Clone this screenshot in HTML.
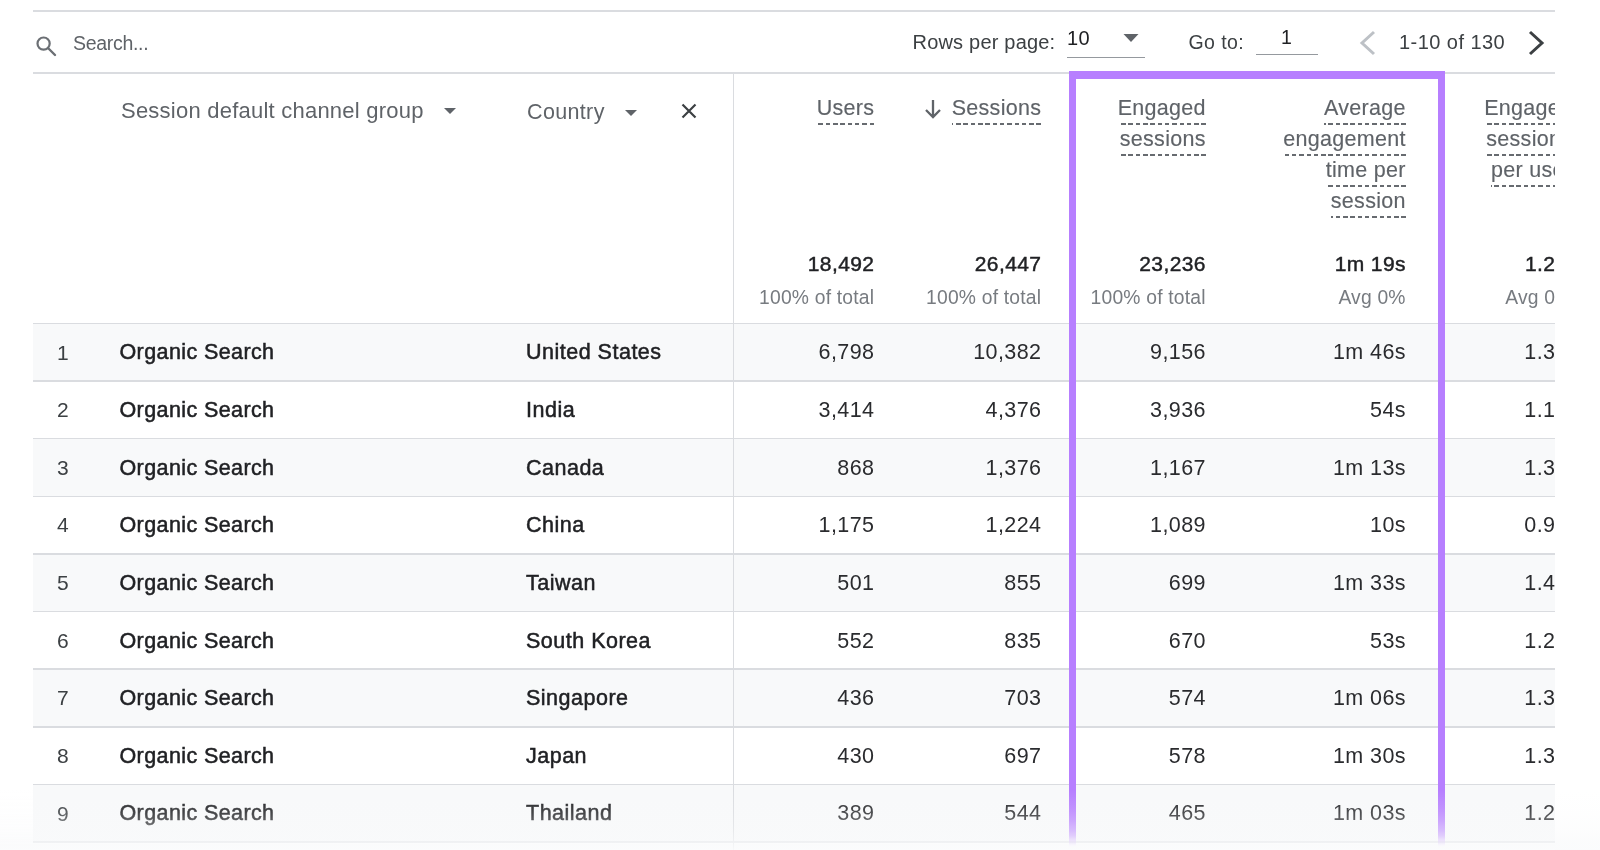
<!DOCTYPE html>
<html><head><meta charset="utf-8"><style>
html,body{margin:0;padding:0;width:1600px;height:850px;overflow:hidden;background:#fff;}
body{position:relative;font-family:"Liberation Sans",sans-serif;-webkit-font-smoothing:antialiased;}
#w{position:absolute;left:0;top:0;width:1600px;height:850px;will-change:transform;}
.t{position:absolute;line-height:0;white-space:nowrap;}
.r{position:absolute;}
.h{color:#5f6368;-webkit-text-stroke:0.15px #5f6368;}
.h span{position:relative;}
.h span::after{content:"";position:absolute;left:0;right:0;bottom:-4.94px;height:2px;background:repeating-linear-gradient(to left,#676b70 0,#676b70 4.5px,transparent 4.5px,transparent 7.3px);}
</style></head><body>
<div id="w">
<div class="r" style="left:33px;top:323.5px;width:1522px;height:57.61px;background:#f8f9fa;"></div>
<div class="r" style="left:33px;top:438.72px;width:1522px;height:57.61px;background:#f8f9fa;"></div>
<div class="r" style="left:33px;top:553.94px;width:1522px;height:57.61px;background:#f8f9fa;"></div>
<div class="r" style="left:33px;top:669.16px;width:1522px;height:57.61px;background:#f8f9fa;"></div>
<div class="r" style="left:33px;top:784.38px;width:1522px;height:57.61px;background:#f8f9fa;"></div>
<div class="r" style="left:33px;top:10.25px;width:1522px;height:1.5px;background:#dadce0;"></div>
<div class="r" style="left:33px;top:72.25px;width:1522px;height:1.5px;background:#dadce0;"></div>
<div class="r" style="left:33px;top:322.75px;width:1522px;height:1.5px;background:#dadce0;"></div>
<div class="r" style="left:33px;top:380.36px;width:1522px;height:1.5px;background:#dadce0;"></div>
<div class="r" style="left:33px;top:437.97px;width:1522px;height:1.5px;background:#dadce0;"></div>
<div class="r" style="left:33px;top:495.58px;width:1522px;height:1.5px;background:#dadce0;"></div>
<div class="r" style="left:33px;top:553.19px;width:1522px;height:1.5px;background:#dadce0;"></div>
<div class="r" style="left:33px;top:610.8px;width:1522px;height:1.5px;background:#dadce0;"></div>
<div class="r" style="left:33px;top:668.41px;width:1522px;height:1.5px;background:#dadce0;"></div>
<div class="r" style="left:33px;top:726.02px;width:1522px;height:1.5px;background:#dadce0;"></div>
<div class="r" style="left:33px;top:783.63px;width:1522px;height:1.5px;background:#dadce0;"></div>
<div class="r" style="left:33px;top:841.24px;width:1522px;height:1.5px;background:#dadce0;"></div>
<div class="r" style="left:732.75px;top:73px;width:1.5px;height:777px;background:#dadce0;"></div>
<svg class="r" style="left:34px;top:34px" width="24" height="24" viewBox="0 0 24 24"><circle cx="9.6" cy="9.6" r="6.1" fill="none" stroke="#6b6f74" stroke-width="2.2"/><path d="M14 14 L21 21" stroke="#6b6f74" stroke-width="2.4" stroke-linecap="round"/></svg>
<div class="t" style="left:73.00px;top:43.24px;font-size:19.5px;color:#5f6368;font-weight:400;letter-spacing:-0.3px;">Search...</div>
<div class="t" style="left:912.50px;top:42.07px;font-size:20px;color:#3c4043;font-weight:400;letter-spacing:0.2px;">Rows per page:</div>
<div class="t" style="left:1067.00px;top:38.07px;font-size:20px;color:#202124;font-weight:400;letter-spacing:0.4px;">10</div>
<svg class="r" style="left:1122px;top:33px" width="18" height="10" viewBox="0 0 18 10"><path d="M1.5 1 L16.5 1 L9 9 Z" fill="#5f6368"/></svg>
<div class="r" style="left:1067px;top:56.75px;width:78px;height:1.5px;background:#95999e;"></div>
<div class="t" style="left:1188.50px;top:41.99px;font-size:19.5px;color:#3c4043;font-weight:400;letter-spacing:0.4px;">Go to:</div>
<div class="t" style="left:1281.00px;top:36.99px;font-size:19.5px;color:#202124;font-weight:400;">1</div>
<div class="r" style="left:1256px;top:53.75px;width:62px;height:1.5px;background:#95999e;"></div>
<svg class="r" style="left:1356px;top:29px" width="24" height="28" viewBox="0 0 24 28"><path d="M18 3 L6 14 L18 25" fill="none" stroke="#bdc1c6" stroke-width="3"/></svg>
<div class="t" style="left:1399.00px;top:41.82px;font-size:20px;color:#3c4043;font-weight:400;letter-spacing:0.45px;">1-10 of 130</div>
<svg class="r" style="left:1524px;top:29px" width="24" height="28" viewBox="0 0 24 28"><path d="M6 3 L18 14 L6 25" fill="none" stroke="#3c4043" stroke-width="3"/></svg>
<div class="t" style="left:121.00px;top:110.88px;font-size:22px;color:#5f6368;font-weight:400;letter-spacing:0.23px;">Session default channel group</div>
<svg class="r" style="left:442px;top:106px" width="16" height="10" viewBox="0 0 16 10"><path d="M2 2 L14 2 L8 8 Z" fill="#5f6368"/></svg>
<div class="t" style="left:527.00px;top:112.05px;font-size:21.5px;color:#5f6368;font-weight:400;letter-spacing:0.35px;">Country</div>
<svg class="r" style="left:623px;top:108px" width="16" height="10" viewBox="0 0 16 10"><path d="M2 2 L14 2 L8 8 Z" fill="#5f6368"/></svg>
<svg class="r" style="left:679px;top:101px" width="20" height="20" viewBox="0 0 20 20"><path d="M3.5 3.5 L16.5 16.5 M16.5 3.5 L3.5 16.5" stroke="#3c4043" stroke-width="2.2"/></svg>
<div class="t h" style="right:725.70px;top:107.85px;font-size:21.5px;letter-spacing:0.3px;"><span>Users</span></div>
<div class="t h" style="right:558.70px;top:107.85px;font-size:21.5px;letter-spacing:0.3px;"><span>Sessions</span></div>
<svg class="r" style="left:923px;top:98px" width="20" height="22" viewBox="0 0 20 22"><path d="M10 2 L10 19 M3 12 L10 19 L17 12" fill="none" stroke="#5f6368" stroke-width="2.3"/></svg>
<div class="t h" style="right:394.20px;top:107.85px;font-size:21.5px;letter-spacing:0.3px;"><span>Engaged</span></div>
<div class="t h" style="right:394.20px;top:138.85px;font-size:21.5px;letter-spacing:0.3px;"><span>sessions</span></div>
<div class="t h" style="right:194.20px;top:107.85px;font-size:21.5px;letter-spacing:0.3px;"><span>Average</span></div>
<div class="t h" style="right:194.20px;top:138.85px;font-size:21.5px;letter-spacing:0.3px;"><span>engagement</span></div>
<div class="t h" style="right:194.20px;top:169.85px;font-size:21.5px;letter-spacing:0.3px;"><span>time per</span></div>
<div class="t h" style="right:194.20px;top:200.85px;font-size:21.5px;letter-spacing:0.3px;"><span>session</span></div>
<div class="t h" style="right:27.70px;top:107.85px;font-size:21.5px;letter-spacing:0.3px;"><span>Engaged</span></div>
<div class="t h" style="right:27.70px;top:138.85px;font-size:21.5px;letter-spacing:0.3px;"><span>sessions</span></div>
<div class="t h" style="right:27.70px;top:169.85px;font-size:21.5px;letter-spacing:0.3px;"><span>per user</span></div>
<div class="t" style="right:725.60px;text-align:right;top:263.72px;font-size:21px;color:#202124;font-weight:400;-webkit-text-stroke:0.45px #202124;letter-spacing:0.4px;">18,492</div>
<div class="t" style="right:725.80px;text-align:right;top:297.81px;font-size:19.3px;color:#777b80;font-weight:400;letter-spacing:0.2px;">100% of total</div>
<div class="t" style="right:558.60px;text-align:right;top:263.72px;font-size:21px;color:#202124;font-weight:400;-webkit-text-stroke:0.45px #202124;letter-spacing:0.4px;">26,447</div>
<div class="t" style="right:558.80px;text-align:right;top:297.81px;font-size:19.3px;color:#777b80;font-weight:400;letter-spacing:0.2px;">100% of total</div>
<div class="t" style="right:394.10px;text-align:right;top:263.72px;font-size:21px;color:#202124;font-weight:400;-webkit-text-stroke:0.45px #202124;letter-spacing:0.4px;">23,236</div>
<div class="t" style="right:394.30px;text-align:right;top:297.81px;font-size:19.3px;color:#777b80;font-weight:400;letter-spacing:0.2px;">100% of total</div>
<div class="t" style="right:194.10px;text-align:right;top:263.72px;font-size:21px;color:#202124;font-weight:400;-webkit-text-stroke:0.45px #202124;letter-spacing:0.4px;">1m 19s</div>
<div class="t" style="right:194.30px;text-align:right;top:297.81px;font-size:19.3px;color:#777b80;font-weight:400;letter-spacing:0.2px;">Avg 0%</div>
<div class="t" style="right:44.60px;text-align:right;top:263.72px;font-size:21px;color:#202124;font-weight:400;-webkit-text-stroke:0.45px #202124;letter-spacing:0.4px;">1.2</div>
<div class="t" style="right:44.80px;text-align:right;top:297.81px;font-size:19.3px;color:#777b80;font-weight:400;letter-spacing:0.2px;">Avg 0</div>
<div class="t" style="left:57.00px;top:352.62px;font-size:21px;color:#3c4043;font-weight:400;">1</div>
<div class="t" style="left:119.50px;top:352.45px;font-size:21.5px;color:#202124;font-weight:400;-webkit-text-stroke:0.5px #202124;letter-spacing:0.4px;">Organic Search</div>
<div class="t" style="left:526.00px;top:352.45px;font-size:21.5px;color:#202124;font-weight:400;-webkit-text-stroke:0.5px #202124;letter-spacing:0.5px;">United States</div>
<div class="t" style="right:725.60px;text-align:right;top:352.45px;font-size:21.5px;color:#2a2b2e;font-weight:400;letter-spacing:0.4px;">6,798</div>
<div class="t" style="right:558.60px;text-align:right;top:352.45px;font-size:21.5px;color:#2a2b2e;font-weight:400;letter-spacing:0.4px;">10,382</div>
<div class="t" style="right:394.10px;text-align:right;top:352.45px;font-size:21.5px;color:#2a2b2e;font-weight:400;letter-spacing:0.4px;">9,156</div>
<div class="t" style="right:194.10px;text-align:right;top:352.45px;font-size:21.5px;color:#2a2b2e;font-weight:400;letter-spacing:0.4px;">1m 46s</div>
<div class="t" style="right:44.60px;text-align:right;top:352.45px;font-size:21.5px;color:#2a2b2e;font-weight:400;letter-spacing:0.4px;">1.3</div>
<div class="t" style="left:57.00px;top:410.23px;font-size:21px;color:#3c4043;font-weight:400;">2</div>
<div class="t" style="left:119.50px;top:410.06px;font-size:21.5px;color:#202124;font-weight:400;-webkit-text-stroke:0.5px #202124;letter-spacing:0.4px;">Organic Search</div>
<div class="t" style="left:526.00px;top:410.06px;font-size:21.5px;color:#202124;font-weight:400;-webkit-text-stroke:0.5px #202124;letter-spacing:0.5px;">India</div>
<div class="t" style="right:725.60px;text-align:right;top:410.06px;font-size:21.5px;color:#2a2b2e;font-weight:400;letter-spacing:0.4px;">3,414</div>
<div class="t" style="right:558.60px;text-align:right;top:410.06px;font-size:21.5px;color:#2a2b2e;font-weight:400;letter-spacing:0.4px;">4,376</div>
<div class="t" style="right:394.10px;text-align:right;top:410.06px;font-size:21.5px;color:#2a2b2e;font-weight:400;letter-spacing:0.4px;">3,936</div>
<div class="t" style="right:194.10px;text-align:right;top:410.06px;font-size:21.5px;color:#2a2b2e;font-weight:400;letter-spacing:0.4px;">54s</div>
<div class="t" style="right:44.60px;text-align:right;top:410.06px;font-size:21.5px;color:#2a2b2e;font-weight:400;letter-spacing:0.4px;">1.1</div>
<div class="t" style="left:57.00px;top:467.84px;font-size:21px;color:#3c4043;font-weight:400;">3</div>
<div class="t" style="left:119.50px;top:467.67px;font-size:21.5px;color:#202124;font-weight:400;-webkit-text-stroke:0.5px #202124;letter-spacing:0.4px;">Organic Search</div>
<div class="t" style="left:526.00px;top:467.67px;font-size:21.5px;color:#202124;font-weight:400;-webkit-text-stroke:0.5px #202124;letter-spacing:0.5px;">Canada</div>
<div class="t" style="right:725.60px;text-align:right;top:467.67px;font-size:21.5px;color:#2a2b2e;font-weight:400;letter-spacing:0.4px;">868</div>
<div class="t" style="right:558.60px;text-align:right;top:467.67px;font-size:21.5px;color:#2a2b2e;font-weight:400;letter-spacing:0.4px;">1,376</div>
<div class="t" style="right:394.10px;text-align:right;top:467.67px;font-size:21.5px;color:#2a2b2e;font-weight:400;letter-spacing:0.4px;">1,167</div>
<div class="t" style="right:194.10px;text-align:right;top:467.67px;font-size:21.5px;color:#2a2b2e;font-weight:400;letter-spacing:0.4px;">1m 13s</div>
<div class="t" style="right:44.60px;text-align:right;top:467.67px;font-size:21.5px;color:#2a2b2e;font-weight:400;letter-spacing:0.4px;">1.3</div>
<div class="t" style="left:57.00px;top:525.45px;font-size:21px;color:#3c4043;font-weight:400;">4</div>
<div class="t" style="left:119.50px;top:525.28px;font-size:21.5px;color:#202124;font-weight:400;-webkit-text-stroke:0.5px #202124;letter-spacing:0.4px;">Organic Search</div>
<div class="t" style="left:526.00px;top:525.28px;font-size:21.5px;color:#202124;font-weight:400;-webkit-text-stroke:0.5px #202124;letter-spacing:0.5px;">China</div>
<div class="t" style="right:725.60px;text-align:right;top:525.28px;font-size:21.5px;color:#2a2b2e;font-weight:400;letter-spacing:0.4px;">1,175</div>
<div class="t" style="right:558.60px;text-align:right;top:525.28px;font-size:21.5px;color:#2a2b2e;font-weight:400;letter-spacing:0.4px;">1,224</div>
<div class="t" style="right:394.10px;text-align:right;top:525.28px;font-size:21.5px;color:#2a2b2e;font-weight:400;letter-spacing:0.4px;">1,089</div>
<div class="t" style="right:194.10px;text-align:right;top:525.28px;font-size:21.5px;color:#2a2b2e;font-weight:400;letter-spacing:0.4px;">10s</div>
<div class="t" style="right:44.60px;text-align:right;top:525.28px;font-size:21.5px;color:#2a2b2e;font-weight:400;letter-spacing:0.4px;">0.9</div>
<div class="t" style="left:57.00px;top:583.06px;font-size:21px;color:#3c4043;font-weight:400;">5</div>
<div class="t" style="left:119.50px;top:582.89px;font-size:21.5px;color:#202124;font-weight:400;-webkit-text-stroke:0.5px #202124;letter-spacing:0.4px;">Organic Search</div>
<div class="t" style="left:526.00px;top:582.89px;font-size:21.5px;color:#202124;font-weight:400;-webkit-text-stroke:0.5px #202124;letter-spacing:0.5px;">Taiwan</div>
<div class="t" style="right:725.60px;text-align:right;top:582.89px;font-size:21.5px;color:#2a2b2e;font-weight:400;letter-spacing:0.4px;">501</div>
<div class="t" style="right:558.60px;text-align:right;top:582.89px;font-size:21.5px;color:#2a2b2e;font-weight:400;letter-spacing:0.4px;">855</div>
<div class="t" style="right:394.10px;text-align:right;top:582.89px;font-size:21.5px;color:#2a2b2e;font-weight:400;letter-spacing:0.4px;">699</div>
<div class="t" style="right:194.10px;text-align:right;top:582.89px;font-size:21.5px;color:#2a2b2e;font-weight:400;letter-spacing:0.4px;">1m 33s</div>
<div class="t" style="right:44.60px;text-align:right;top:582.89px;font-size:21.5px;color:#2a2b2e;font-weight:400;letter-spacing:0.4px;">1.4</div>
<div class="t" style="left:57.00px;top:640.67px;font-size:21px;color:#3c4043;font-weight:400;">6</div>
<div class="t" style="left:119.50px;top:640.50px;font-size:21.5px;color:#202124;font-weight:400;-webkit-text-stroke:0.5px #202124;letter-spacing:0.4px;">Organic Search</div>
<div class="t" style="left:526.00px;top:640.50px;font-size:21.5px;color:#202124;font-weight:400;-webkit-text-stroke:0.5px #202124;letter-spacing:0.5px;">South Korea</div>
<div class="t" style="right:725.60px;text-align:right;top:640.50px;font-size:21.5px;color:#2a2b2e;font-weight:400;letter-spacing:0.4px;">552</div>
<div class="t" style="right:558.60px;text-align:right;top:640.50px;font-size:21.5px;color:#2a2b2e;font-weight:400;letter-spacing:0.4px;">835</div>
<div class="t" style="right:394.10px;text-align:right;top:640.50px;font-size:21.5px;color:#2a2b2e;font-weight:400;letter-spacing:0.4px;">670</div>
<div class="t" style="right:194.10px;text-align:right;top:640.50px;font-size:21.5px;color:#2a2b2e;font-weight:400;letter-spacing:0.4px;">53s</div>
<div class="t" style="right:44.60px;text-align:right;top:640.50px;font-size:21.5px;color:#2a2b2e;font-weight:400;letter-spacing:0.4px;">1.2</div>
<div class="t" style="left:57.00px;top:698.28px;font-size:21px;color:#3c4043;font-weight:400;">7</div>
<div class="t" style="left:119.50px;top:698.11px;font-size:21.5px;color:#202124;font-weight:400;-webkit-text-stroke:0.5px #202124;letter-spacing:0.4px;">Organic Search</div>
<div class="t" style="left:526.00px;top:698.11px;font-size:21.5px;color:#202124;font-weight:400;-webkit-text-stroke:0.5px #202124;letter-spacing:0.5px;">Singapore</div>
<div class="t" style="right:725.60px;text-align:right;top:698.11px;font-size:21.5px;color:#2a2b2e;font-weight:400;letter-spacing:0.4px;">436</div>
<div class="t" style="right:558.60px;text-align:right;top:698.11px;font-size:21.5px;color:#2a2b2e;font-weight:400;letter-spacing:0.4px;">703</div>
<div class="t" style="right:394.10px;text-align:right;top:698.11px;font-size:21.5px;color:#2a2b2e;font-weight:400;letter-spacing:0.4px;">574</div>
<div class="t" style="right:194.10px;text-align:right;top:698.11px;font-size:21.5px;color:#2a2b2e;font-weight:400;letter-spacing:0.4px;">1m 06s</div>
<div class="t" style="right:44.60px;text-align:right;top:698.11px;font-size:21.5px;color:#2a2b2e;font-weight:400;letter-spacing:0.4px;">1.3</div>
<div class="t" style="left:57.00px;top:755.89px;font-size:21px;color:#3c4043;font-weight:400;">8</div>
<div class="t" style="left:119.50px;top:755.72px;font-size:21.5px;color:#202124;font-weight:400;-webkit-text-stroke:0.5px #202124;letter-spacing:0.4px;">Organic Search</div>
<div class="t" style="left:526.00px;top:755.72px;font-size:21.5px;color:#202124;font-weight:400;-webkit-text-stroke:0.5px #202124;letter-spacing:0.5px;">Japan</div>
<div class="t" style="right:725.60px;text-align:right;top:755.72px;font-size:21.5px;color:#2a2b2e;font-weight:400;letter-spacing:0.4px;">430</div>
<div class="t" style="right:558.60px;text-align:right;top:755.72px;font-size:21.5px;color:#2a2b2e;font-weight:400;letter-spacing:0.4px;">697</div>
<div class="t" style="right:394.10px;text-align:right;top:755.72px;font-size:21.5px;color:#2a2b2e;font-weight:400;letter-spacing:0.4px;">578</div>
<div class="t" style="right:194.10px;text-align:right;top:755.72px;font-size:21.5px;color:#2a2b2e;font-weight:400;letter-spacing:0.4px;">1m 30s</div>
<div class="t" style="right:44.60px;text-align:right;top:755.72px;font-size:21.5px;color:#2a2b2e;font-weight:400;letter-spacing:0.4px;">1.3</div>
<div class="t" style="left:57.00px;top:813.50px;font-size:21px;color:#3c4043;font-weight:400;">9</div>
<div class="t" style="left:119.50px;top:813.33px;font-size:21.5px;color:#202124;font-weight:400;-webkit-text-stroke:0.5px #202124;letter-spacing:0.4px;">Organic Search</div>
<div class="t" style="left:526.00px;top:813.33px;font-size:21.5px;color:#202124;font-weight:400;-webkit-text-stroke:0.5px #202124;letter-spacing:0.5px;">Thailand</div>
<div class="t" style="right:725.60px;text-align:right;top:813.33px;font-size:21.5px;color:#2a2b2e;font-weight:400;letter-spacing:0.4px;">389</div>
<div class="t" style="right:558.60px;text-align:right;top:813.33px;font-size:21.5px;color:#2a2b2e;font-weight:400;letter-spacing:0.4px;">544</div>
<div class="t" style="right:394.10px;text-align:right;top:813.33px;font-size:21.5px;color:#2a2b2e;font-weight:400;letter-spacing:0.4px;">465</div>
<div class="t" style="right:194.10px;text-align:right;top:813.33px;font-size:21.5px;color:#2a2b2e;font-weight:400;letter-spacing:0.4px;">1m 03s</div>
<div class="t" style="right:44.60px;text-align:right;top:813.33px;font-size:21.5px;color:#2a2b2e;font-weight:400;letter-spacing:0.4px;">1.2</div>
<div class="r" style="left:1068.5px;top:71px;width:376px;height:779px;box-sizing:border-box;border:7.5px solid #b77fff;border-top-width:8px;border-bottom:none;-webkit-mask-image:linear-gradient(to bottom,#000 0,#000 725px,rgba(0,0,0,0.95) 750px,rgba(0,0,0,0.8) 765px,rgba(0,0,0,0.3) 773px,rgba(0,0,0,0) 776px);"></div>
<div class="r" style="left:1555px;top:0px;width:45px;height:850px;background:#fff;"></div>
<div class="r" style="left:0px;top:790px;width:1600px;height:60px;background:linear-gradient(to bottom, rgba(249,250,251,0) 0%, rgba(249,250,251,0.16) 37%, rgba(249,250,251,0.4) 67%, rgba(249,250,251,0.7) 87%, rgba(250,251,252,0.92) 100%);"></div>
</div>
</body></html>
